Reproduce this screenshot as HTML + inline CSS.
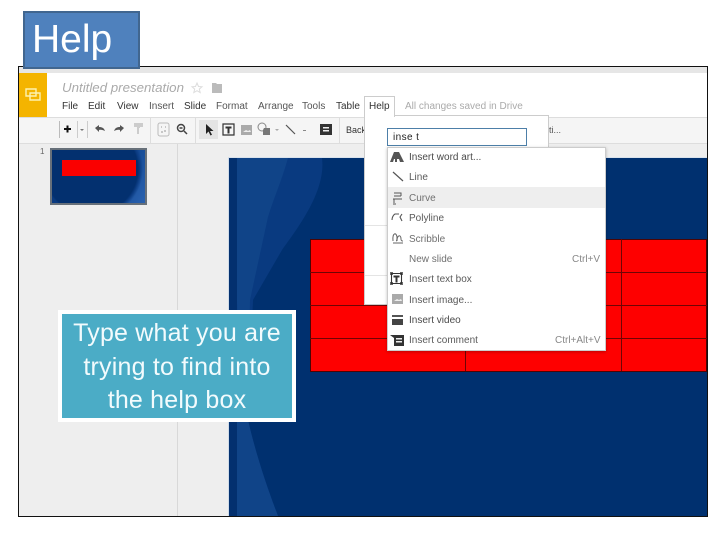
<!DOCTYPE html>
<html><head><meta charset="utf-8"><style>
html,body{margin:0;padding:0;background:#fff}
#p{position:relative;width:720px;height:540px;overflow:hidden;background:#fff;font-family:"Liberation Sans",sans-serif}
#p div{position:absolute;box-sizing:border-box}
.t{white-space:nowrap;color:#444;font-size:10px;line-height:12px;filter:blur(.3px)}
.m{white-space:nowrap;color:#333;font-size:10px;line-height:12px;top:101px;filter:blur(.3px)}
.i{white-space:nowrap;color:#555;font-size:10px;line-height:12px;left:409px;filter:blur(.3px)}
svg{position:absolute;overflow:visible}
</style></head><body><div id="p">
<div style="left:18px;top:66px;width:690px;height:451px;background:#eee;border:1px solid #111"></div>
<div style="left:19px;top:67px;width:688px;height:6px;background:#e6e6e6"></div>
<div style="left:19px;top:73px;width:688px;height:44px;background:#fff"></div>
<div style="left:19px;top:73px;width:28px;height:44px;background:#f4b400"></div>
<svg style="left:0;top:0" width="720" height="540" fill="none"><path d="M26 89h10v7h-10z M30 93h10v7h-10z" stroke="#fdf2b0" stroke-width="1.4"/></svg>
<div class="t" style="left:62px;top:81px;font-size:13.300px;line-height:14px;font-style:italic;color:#aaa">Untitled presentation</div>
<svg style="left:0;top:0" width="720" height="540"><path d="M197 83l1.500 3.500 3.500.3-2.700 2.300.9 3.500-3.200-1.900-3.200 1.900.9-3.500-2.700-2.300 3.500-.3z" fill="none" stroke="#ddd"/><path d="M212 83h4l1 1h5v9h-10z" fill="#bbb"/></svg>
<div class="m" style="left:62px">File</div><div class="m" style="left:88px">Edit</div><div class="m" style="left:117px">View</div><div class="m" style="left:149px;color:#555">Insert</div><div class="m" style="left:184px">Slide</div><div class="m" style="left:216px;color:#555">Format</div><div class="m" style="left:258px;color:#555">Arrange</div><div class="m" style="left:302px;color:#555">Tools</div><div class="m" style="left:336px">Table</div>
<div style="left:19px;top:117px;width:688px;height:27px;background:#f5f5f5;border-top:1px solid #ddd;border-bottom:1px solid #ddd"></div>
<div style="left:150px;top:118px;width:1px;height:25px;background:#ddd"></div><div style="left:195px;top:118px;width:1px;height:25px;background:#ddd"></div><div style="left:339px;top:118px;width:1px;height:25px;background:#ddd"></div>
<div style="left:59px;top:121px;width:1px;height:17px;background:#bbb"></div><div style="left:77px;top:121px;width:1px;height:17px;background:#ccc"></div><div style="left:87px;top:121px;width:1px;height:17px;background:#ccc"></div>
<div style="left:199px;top:120px;width:19px;height:19px;background:#e4e4e4"></div>
<svg style="left:0;top:0" width="720" height="540" fill="none">
<path d="M64 129h7M67.500 125.500v7" stroke="#111" stroke-width="2"/>
<path d="M80 129l2 2 2-2z" fill="#777"/>
<path d="M95 128l4-3v2c3 0 5 1 6 4-2-1-4-1.500-6-1v2z" fill="#555"/>
<path d="M124 128l-4-3v2c-3 0-5 1-6 4 2-1 4-1.500 6-1v2z" fill="#555"/>
<path d="M134 123h9v4h-9z M137 127h3v1h-1v6h-2z" fill="#ccc"/>
<rect x="158" y="123" width="11" height="13" rx="2" stroke="#bbb"/><path d="M161 127h1M165 127h1M162 131v2M165 130v2" stroke="#999"/>
<circle cx="181" cy="128" r="3.500" stroke="#444" stroke-width="1.500"/><path d="M179.500 128h3M184 131l3 3" stroke="#444" stroke-width="1.500"/>
<path d="M206 124v10l2.500-2.500 2 4 1.500-.7-2-3.800h3.500z" fill="#222"/>
<path d="M223 124h11v11h-11z" stroke="#333" stroke-width="1.200"/><path d="M225.500 126.500h6v2h-2v5h-2v-5h-2z" fill="#333"/>
<path d="M241 125h11v10h-11z" fill="#aaa"/><path d="M243 132l3-2 2 1 2-1 1 2z" fill="#eee"/>
<circle cx="262" cy="127" r="4" stroke="#888"/><path d="M264 128h6v7h-7v-5z" fill="#777"/>
<path d="M275 129l4 0-2 2z" fill="#aaa"/><path d="M286 125l9 9" stroke="#555" stroke-width="1.200"/><path d="M303 130h3v1h-3z" fill="#888"/>
<path d="M320 124h12v11h-12z" fill="#333"/><path d="M323 127h6v1.500h-6zM323 130h6v1.500h-6z" fill="#eee"/>
</svg>
<div class="t" style="left:346px;top:124px;font-size:9px;color:#333">Back</div>
<div class="t" style="left:549px;top:124px;font-size:9px;color:#555">ti...</div>
<div style="left:177px;top:144px;width:1px;height:372px;background:#d8d8d8"></div>
<div class="t" style="left:40px;top:147px;font-size:8px;line-height:10px;color:#666">1</div>
<div style="left:50px;top:148px;width:97px;height:57px;border:2px solid #67707a;background:#03306f"></div>
<div style="left:52px;top:150px;width:93px;height:53px;background:radial-gradient(ellipse 52px 50px at 42% 36%,#03306f 0 90%,#0a3a80 93%,rgba(10,58,128,0) 100%),linear-gradient(120deg,#0a3a80 0,#0a3a80 45%,#184e9a 75%,#2a62b0 100%)"></div>
<div style="left:62px;top:160px;width:74px;height:16px;background:#fa0000"></div>
<div style="left:228px;top:157px;width:479px;height:359px;background:#00306f;border-left:1px solid #cfdbe9;border-top:1px solid #d9e2ec"></div>
<svg style="left:0;top:0" width="720" height="540"><path d="M229 158H322C326 190 300 225 282 250L253 300 248 420C256 455 268 490 278 516H229Z" fill="#093a80"/><path d="M237 158H288C282 180 273 200 268 217L250 300 248 420 240 420 237 300Z" fill="#104488"/><path d="M237 420H248C256 455 268 490 278 516H237Z" fill="#104488"/><path d="M229 158H237V516H229Z" fill="#03306f"/></svg>
<div style="left:310px;top:239px;width:397px;height:133px;background:#fe0000;border:1px solid #4c0505"></div>
<div style="left:310px;top:272px;width:397px;height:1px;background:#6e0505"></div><div style="left:310px;top:305px;width:397px;height:1px;background:#6e0505"></div><div style="left:310px;top:338px;width:397px;height:1px;background:#6e0505"></div>
<div style="left:465px;top:239px;width:1px;height:132px;background:#6e0505"></div><div style="left:621px;top:239px;width:1px;height:132px;background:#6e0505"></div>
<div style="left:364px;top:115px;width:185px;height:190px;background:#fff;border:1px solid #ccc"></div>
<div style="left:364px;top:96px;width:31px;height:21px;background:#fff;border:1px solid #ccc;border-bottom:none"></div>
<div class="t" style="left:369px;top:101px;color:#333">Help</div>
<div class="t" style="left:405px;top:101px;color:#aaa">All changes saved in Drive</div>
<div style="left:365px;top:225px;width:22px;height:1px;background:#e4e4e4"></div><div style="left:365px;top:275px;width:22px;height:1px;background:#e4e4e4"></div>
<div style="left:387px;top:128px;width:140px;height:18px;background:#fff;border:1px solid #4d7fa8"></div>
<div class="t" style="left:393px;top:132px;font-size:10px;letter-spacing:.4px;color:#222">inse t</div>
<div style="left:387px;top:147px;width:219px;height:204px;background:#fff;border:1px solid #ccc;box-shadow:0 1px 3px rgba(0,0,0,.25)"></div>
<div style="left:388px;top:187px;width:217px;height:21px;background:#eee"></div>
<div class="i" style="top:151.500px;color:#4a4a4a">Insert word art...</div>
<div class="i" style="top:171.500px;color:#5a5a5a">Line</div>
<div class="i" style="top:192.500px;color:#707070">Curve</div>
<div class="i" style="top:212.500px;color:#5a5a5a">Polyline</div>
<div class="i" style="top:233.500px;color:#707070">Scribble</div>
<div class="i" style="top:253.500px;color:#707070">New slide</div>
<div class="i" style="top:273.500px;color:#5a5a5a">Insert text box</div>
<div class="i" style="top:294.500px;color:#5a5a5a">Insert image...</div>
<div class="i" style="top:314.500px;color:#4a4a4a">Insert video</div>
<div class="i" style="top:334.500px;color:#5a5a5a">Insert comment</div>
<div class="t" style="left:572px;top:253.500px;color:#888">Ctrl+V</div>
<div class="t" style="left:555px;top:334.500px;color:#888">Ctrl+Alt+V</div>
<svg style="left:0;top:0" width="720" height="540" fill="none">
<path d="M390 162l4-10h5l5 10h-4l-1-3h-2v3h-2v-3h-1l-1 3z" fill="#555"/>
<path d="M393 172l10 9" stroke="#555" stroke-width="1.200"/>
<path d="M394 193h7v3M401 196h-7M393 199h9M394 199v4M393 204h3" stroke="#555"/>
<path d="M399 214h-4c-2 1-3 4-3 6M402 214l-2 3 2 4" stroke="#555" stroke-width="1.100"/>
<path d="M393 241c-1-9 4-9 4-3 0 3-1 3-1 3M397 241c0-6 4-7 4-2 0 2 1 2 2 2M393 243h10" stroke="#666"/>
<path d="M391.500 273.500h10v10h-10z" stroke="#333" stroke-width="1.100"/><path d="M393.500 275.500h6v2h-2v5h-2v-5h-2z" fill="#333"/>
<path d="M390.500 272.500h2v2h-2zM400.500 272.500h2v2h-2zM390.500 282.500h2v2h-2zM400.500 282.500h2v2h-2z" stroke="#333" stroke-width=".7"/>
<path d="M392 294h11v10h-11z" fill="#aaa"/><path d="M394 301l3-2 2 1 2-1 1 2z" fill="#eee"/>
<path d="M392 319h11v6h-11z" fill="#444"/><path d="M392 315h11v2h-11z" fill="#555"/>
<path d="M390 335h14v11h-10v-8z" fill="#333"/><path d="M396 338h6v1.500h-6zM396 341h6v1.500h-6z" fill="#eee"/>
</svg>
<div style="left:23px;top:11px;width:117px;height:58px;background:#4f81bd;border:2px solid #41668f"></div>
<div style="left:32px;top:17px;color:#fff;font-size:39px;line-height:46px;white-space:nowrap">Help</div>
<div style="left:58px;top:310px;width:238px;height:112px;background:#4bacc6;border:4px solid #fff"></div>
<div style="left:58px;top:317px;width:238px;color:#f2fbfd;font-size:25px;letter-spacing:.2px;line-height:33.500px;text-align:center;white-space:nowrap">Type what you are<br>trying to find into<br>the help box</div>
</div></body></html>
